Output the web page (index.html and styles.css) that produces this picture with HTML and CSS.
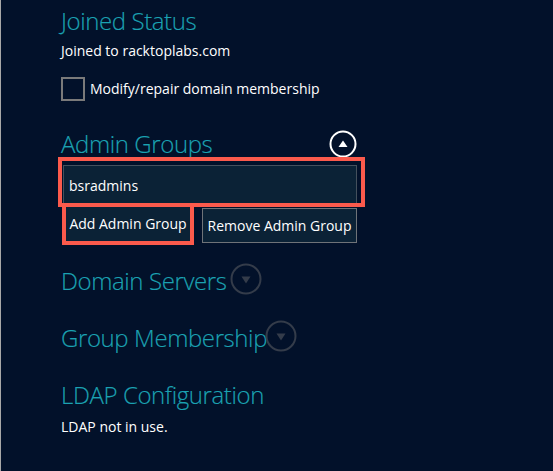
FILE: index.html
```html
<!DOCTYPE html>
<html>
<head>
<meta charset="utf-8">
<link rel="stylesheet" href="styles.css">
</head>
<body>
<div class="panel">
  <section class="sec">
    <h2 class="title">Joined Status</h2>
    <p class="text">Joined to racktoplabs.com</p>
    <label class="check"><span class="box"></span><span>Modify/repair domain membership</span></label>
  </section>

  <section class="sec admin">
    <div class="title-row">
      <h2 class="title">Admin Groups</h2>
      <span class="circle up"><svg width="28" height="28" viewBox="0 0 28 28"><circle cx="14" cy="14" r="12.5" fill="none" stroke="#fff" stroke-width="2"/><path d="M9.5 17 L14 10.5 L18.5 17 Z" fill="#fff"/></svg></span>
    </div>
    <div class="hl hl-input"><div class="input">bsradmins</div></div>
    <div class="btns">
      <div class="hl hl-btn"><button class="btn">Add Admin Group</button></div>
      <button class="btn outline">Remove Admin Group</button>
    </div>
  </section>

  <section class="sec collapsed ds">
    <h2 class="title">Domain Servers</h2>
    <span class="circle down"><svg width="32" height="32" viewBox="0 0 32 32"><circle cx="16" cy="16" r="14.5" fill="none" stroke="#343c4a" stroke-width="2"/><path d="M11.5 13.5 L20.5 13.5 L16 20.5 Z" fill="#343c4a"/></svg></span>
  </section>

  <section class="sec collapsed gm">
    <h2 class="title">Group Membership</h2>
    <span class="circle down"><svg width="32" height="32" viewBox="0 0 32 32"><circle cx="16" cy="16" r="14.5" fill="none" stroke="#343c4a" stroke-width="2"/><path d="M11.5 13.5 L20.5 13.5 L16 20.5 Z" fill="#343c4a"/></svg></span>
  </section>

  <section class="sec ldap">
    <h2 class="title">LDAP Configuration</h2>
    <p class="text ldap-text">LDAP not in use.</p>
  </section>
</div>
</body>
</html>
```

FILE: styles.css
```css
html, body {
  margin: 0;
  padding: 0;
  height: 100%;
}
body {
  background: #02112a;
  font-family: "Open Sans", "Noto Sans", sans-serif;
  color: #ffffff;
  border-left: 1px solid #a8a8a8;
  box-sizing: border-box;
  overflow: hidden;
}
.panel {
  padding: 5px 0 0 60px;
  display: flex;
  flex-direction: column;
}
.sec {
  display: flex;
  flex-direction: column;
}
.title {
  margin: 0;
  font-weight: 300;
  font-size: 24px;
  line-height: 32px;
  color: #1ba2b2;
  letter-spacing: -0.4px;
  -webkit-text-stroke: 0.15px #1ba2b2;
}
.text {
  margin: 4px 0 0 0;
  font-size: 14px;
  line-height: 20px;
}
.check {
  margin-top: 16px;
  display: flex;
  align-items: center;
  gap: 5px;
  font-size: 14px;
  line-height: 20px;
}
.box {
  width: 20px;
  height: 20px;
  border: 2px solid #7a7a7a;
  flex: none;
}
.admin {
  margin-top: 27px;
  width: 306px;
}
.title-row {
  display: flex;
  justify-content: space-between;
  align-items: center;
}
.circle {
  display: flex;
}
.circle.up {
  margin-right: 10px;
}
.hl {
  border: 4px solid #fb5a4c;
  box-sizing: border-box;
}
.hl-input {
  margin-left: -3px;
  margin-top: -3px;
  width: 307px;
  height: 50px;
  padding: 4px 4px 0 1px;
}
.input {
  height: 38px;
  box-sizing: border-box;
  background: #0b2236;
  border: 1px solid #44505c;
  border-bottom: none;
  font-size: 14px;
  line-height: 20px;
  padding: 10px 0 0 5px;
}
.btns {
  display: flex;
  align-items: flex-start;
  margin-top: -4px;
}
.hl-btn {
  margin-left: 1px;
  width: 132px;
  height: 42px;
}
.btn {
  font-family: inherit;
  font-size: 14px;
  line-height: 20px;
  color: #ffffff;
  background: #0b2236;
  border: none;
  height: 34px;
  width: 100%;
  padding: 0;
  margin: 0;
  white-space: nowrap;
}
.btn.outline {
  margin-top: 5px;
  margin-left: 8px;
  width: 155px;
  height: 35px;
  border: 1px solid #6f7378;
  padding: 0 2px;
}
.collapsed {
  flex-direction: row;
  align-items: center;
}
.collapsed .circle {
  margin-top: -4px;
}
.ds {
  margin-top: 20px;
}
.ds .circle {
  margin-left: 3px;
}
.gm {
  margin-top: 25px;
}
.gm .circle {
  margin-left: -2px;
}
.ldap {
  margin-top: 25px;
}
.ldap-text {
  margin-top: 6px;
}
```
